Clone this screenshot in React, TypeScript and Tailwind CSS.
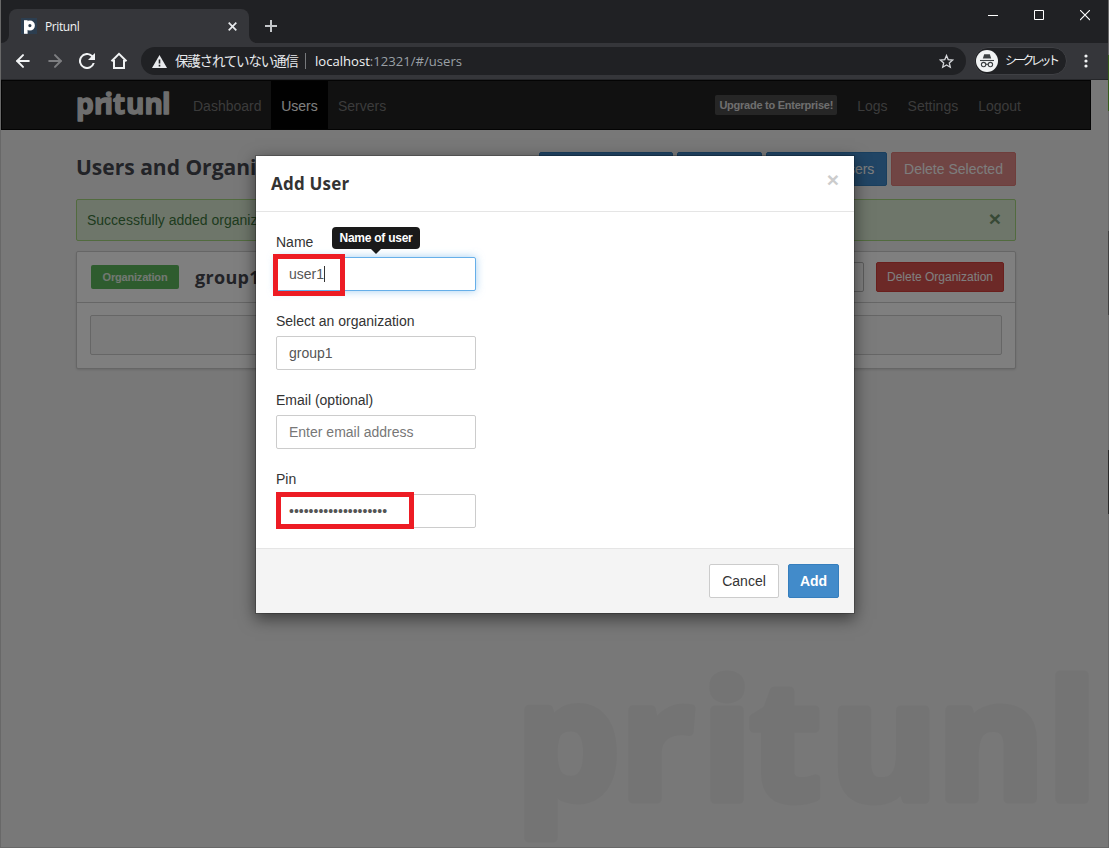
import React from "react";
import { ArrowLeft, ArrowRight } from "lucide-react";

const sans = "font-['Liberation_Sans',Arial,sans-serif]";
const ui = "font-['Open_Sans','Noto_Sans_CJK_JP',sans-serif]";
const heading = "font-['Open_Sans',sans-serif]";

function TitleBar() {
	return (
		<div className="flex h-[43px] bg-[#202124] pt-[9px] pl-[9px]">
			<div className="relative flex h-[34px] w-60 items-center rounded-t-lg bg-[#35363a] pl-3">
				<svg className="absolute bottom-0 -left-2" width="8" height="8">
					<path d="M8 0A8 8 0 0 1 0 8H8Z" fill="#35363a" />
				</svg>
				<svg className="absolute -right-2 bottom-0" width="8" height="8">
					<path d="M0 0A8 8 0 0 0 8 8H0Z" fill="#35363a" />
				</svg>
				<div className="flex h-4 w-4 items-center justify-center bg-[#2c3e50]">
					<svg width="16" height="16">
						<path d="M4.8 14V4" stroke="#fff" strokeWidth="3.6" strokeLinecap="square" />
						<circle cx="8.9" cy="7.6" r="3.3" fill="none" stroke="#fff" strokeWidth="3.4" />
					</svg>
				</div>
				<span className="mt-px ml-2 text-xs tracking-[-0.4px] text-[#f1f3f4]">Pritunl</span>
				<svg className="absolute top-[13px] left-[219px]" width="9" height="9">
					<path d="M0.7 0.7L8.3 8.3M8.3 0.7L0.7 8.3" stroke="#e8eaed" strokeWidth="1.7" />
				</svg>
			</div>
			<svg className="mt-[11px] ml-4" width="12" height="12">
				<path d="M6 0V12M0 6H12" stroke="#c4c7ca" strokeWidth="2" />
			</svg>
			<div className="ml-auto flex gap-[36px] pr-[19px]">
				<svg width="10" height="11">
					<path d="M0 6.5H10" stroke="#fff" />
				</svg>
				<svg width="10" height="11" className="mt-px">
					<path d="M0.5 0.5H9.5V9.5H0.5Z" fill="none" stroke="#fff" />
				</svg>
				<svg width="10" height="11" className="mt-px">
					<path d="M0 0L10 10M10 0L0 10" stroke="#fff" strokeWidth="1.1" />
				</svg>
			</div>
		</div>
	);
}

function Toolbar() {
	return (
		<div className="flex h-[37px] items-center border-b border-[#26272a] bg-[#35363a] pl-[13px]">
			<ArrowLeft className="h-5 w-5 text-[#f1f3f4]" strokeWidth={2.4} />
			<ArrowRight className="ml-3 h-5 w-5 text-[#7d7e81]" strokeWidth={2.4} />
			<svg className="ml-[14px]" width="16" height="16" viewBox="4 4 16 16">
				<path
					d="M17.65 6.35A8 8 0 1 0 19.73 14h-2.08A6 6 0 1 1 12 6c1.66 0 3.14.69 4.22 1.78L13 11h7V4z"
					fill="#f1f3f4"
				/>
			</svg>
			<svg className="ml-[15px]" width="18" height="18">
				<path d="M4 8V16H14V8M1.5 9.2L9 1.8L16.5 9.2" fill="none" stroke="#f1f3f4" strokeWidth="2" />
			</svg>
			<div className="ml-[13px] flex h-7 w-[825px] items-center rounded-full bg-[#202124] pl-[11px]">
				<svg width="15" height="13">
					<path d="M7.5 0L15 13H0Z" fill="#e8eaed" />
					<path d="M7.5 4.5V8.5M7.5 9.8V11.4" stroke="#202124" strokeWidth="1.6" />
				</svg>
				<span className="ml-[8px] w-[123px] text-[13.5px] tracking-[-1.2px] whitespace-nowrap text-[#e8eaed]">
					保護されていない通信
				</span>
				<span className="ml-[7px] h-4 w-px bg-[#77797c]" />
				<span className="mt-px ml-[9px] text-[13.1px] whitespace-nowrap text-[#f1f3f4]">
					localhost<span className="text-[#9aa0a6]">:12321/#/users</span>
				</span>
				<svg className="mr-[12px] ml-auto" width="15" height="15" viewBox="0 0 15 15">
					<path
						d="M7.5 1.5L9.2 5.6L13.7 6L10.3 8.9L11.3 13.2L7.5 10.9L3.7 13.2L4.7 8.9L1.3 6L5.8 5.6Z"
						fill="none"
						stroke="#d5d7da"
						strokeWidth="1.3"
					/>
				</svg>
			</div>
			<div className="ml-[8px] flex h-7 w-[93px] items-center rounded-full border border-[#3f4044] bg-[#202124] pl-px">
				<svg width="22" height="22">
					<circle cx="11" cy="11" r="11" fill="#f1f3f4" />
					<path d="M8.2 4.2H13.8L15.2 8.4H6.8Z" fill="#3c4043" />
					<path d="M4 10.5H18" stroke="#3c4043" strokeWidth="1.1" />
					<g fill="none" stroke="#3c4043" strokeWidth="1.1">
						<circle cx="7.6" cy="14.6" r="2.2" />
						<circle cx="14.4" cy="14.6" r="2.2" />
						<path d="M9.8 14.3H12.2" />
					</g>
				</svg>
				<span className="ml-[7px] text-xs tracking-[-3.4px] whitespace-nowrap text-[#f1f3f4]">シークレット</span>
			</div>
			<svg className="ml-[17px]" width="4" height="14" fill="#f1f3f4">
				<circle cx="2" cy="2" r="1.6" />
				<circle cx="2" cy="7" r="1.6" />
				<circle cx="2" cy="12" r="1.6" />
			</svg>
		</div>
	);
}

function Navbar() {
	return (
		<div className="ml-px flex h-[50px] w-[1090px] items-center border border-[#080808] bg-[#222] pl-[74px] text-[14px] text-[#777]">
			<svg className="mr-[25px] overflow-visible" width="92" height="32">
				<text
					x="0 18 28.5 37 50 68.5 86"
					y="25"
					className="font-['Open_Sans',sans-serif] text-[28px] font-bold"
					fill="#ddd"
					stroke="#ddd"
					strokeWidth="1.4"
					strokeLinejoin="round"
				>
					pritunl
				</text>
			</svg>
			<a className="w-[78px] pt-[2px]">Dashboard</a>
			<a className="flex h-full w-[57px] items-center justify-center bg-[#020202] pt-[2px] text-white">Users</a>
			<a className="ml-[10px] pt-[2px]">Servers</a>
			<a className="ml-auto flex h-5 w-[122px] items-center justify-center rounded-xs bg-[#4d4d4d] text-[11px] font-bold tracking-[-0.25px] whitespace-nowrap text-[#ddd]">
				Upgrade to Enterprise!
			</a>
			<a className="ml-[20px] pt-[2px]">Logs</a>
			<a className="ml-[20px] pt-[2px]">Settings</a>
			<a className="mr-[69px] ml-[20px] pt-[2px]">Logout</a>
		</div>
	);
}

const primaryButton = "h-[34px] rounded-xs border border-[#357ebd] bg-[#428bca] whitespace-nowrap";

function PageContent() {
	return (
		<div className="ml-[76px] w-[940px] pt-[22px]">
			<div className="flex h-[34px] items-center gap-1 text-[14px] text-white">
				<h2 className={`${heading} mr-auto pb-[3px] text-[21px] font-bold text-[#45474f]`}>
					Users and Organizations
				</h2>
				<button className={`${primaryButton} w-[134px]`}>Add Organization</button>
				<button className={`${primaryButton} w-[85px]`}>Add User</button>
				<button className={`${primaryButton} w-[121px]`}>Bulk Add Users</button>
				<button className="h-[34px] w-[125px] rounded-xs border border-[#de7c79] bg-[#e18a88] text-[#fafafa]">
					Delete Selected
				</button>
			</div>
			<div className="mt-[13px] flex h-[42px] items-center justify-between rounded-xs border border-[#a5d67e] bg-[#dcedd5] pr-[14px] pl-[10px] text-[14px] text-[#3c763d]">
				<span>Successfully added organization.</span>
				<span className="pb-[3px] text-[21px] leading-none font-bold text-[#71936c]">×</span>
			</div>
			<div className="mt-[10px] h-[118px] rounded-xs border border-[#ccc] bg-white shadow-sm">
				<div className="flex h-[51px] items-center border-b border-[#ccc] pr-[11px] pl-[14px]">
					<span className="flex h-6 w-[88px] items-center justify-center rounded-xs bg-[#5cb85c] text-[11px] font-bold tracking-[-0.2px] text-[#e5f0e5]">
						Organization
					</span>
					<h3 className={`${heading} ml-4 text-lg font-bold tracking-[0.3px] text-[#45474f]`}>group1</h3>
					<div className="mr-3 ml-auto h-[30px] w-[150px] rounded-xs border border-[#bbb]" />
					<button className="h-[30px] w-[128px] rounded-xs border border-[#d43f3a] bg-[#d9534f] text-xs whitespace-nowrap text-white">
						Delete Organization
					</button>
				</div>
				<div className="mt-3 ml-[13px] h-10 w-[912px] rounded-xs border border-[#ccc] bg-[#f7f7f7]" />
			</div>
		</div>
	);
}

function Watermark() {
	return (
		<svg className="absolute bottom-0 left-[520px] overflow-visible" width="587" height="190">
			<text
				x="-4 100 182 230 310 417 527"
				y="141"
				className="font-['Open_Sans',sans-serif] text-[164px] font-bold"
				fill="#e9e9e9"
				stroke="#e9e9e9"
				strokeWidth="9"
				strokeLinejoin="round"
			>
				pritunl
			</text>
		</svg>
	);
}

const input = "mt-[5px] flex h-[34px] w-[200px] items-center rounded-xs border bg-white px-3";

function AddUserModal() {
	return (
		<div className="absolute top-[155px] left-[255px] w-[600px] border border-black/20 bg-white bg-clip-padding text-[14px] leading-5 text-[#333] shadow-[0_5px_15px_rgba(0,0,0,0.5)]">
			<div className="flex h-14 items-center justify-between border-b border-[#e5e5e5] px-[15px]">
				<h4 className={`${heading} pt-px text-[17px] font-bold tracking-[0.2px]`}>Add User</h4>
				<span className="mb-2 text-[21px] leading-none font-bold text-[#ccc]">×</span>
			</div>
			<div className="flex flex-col gap-5 p-5">
				<div className="relative">
					<label className="block">Name</label>
					<div className={`${input} border-[#66afe9] text-[#555] shadow-[0_0_8px_rgba(102,175,233,0.6)]`}>
						user1
						<span className="h-4 w-px bg-[#333]" />
					</div>
					<div className="absolute -top-[5px] left-14 flex h-[22px] w-[88px] items-center justify-center rounded-[4px] bg-[#1a1a1a] text-xs font-bold tracking-[-0.25px] whitespace-nowrap text-white">
						Name of user
						<svg className="absolute top-[22px] left-[39px]" width="10" height="5">
							<path d="M0 0H10L5 5Z" fill="#1a1a1a" />
						</svg>
					</div>
					<div className="absolute top-[22px] -left-[3px] h-[42px] w-[72px] border-[5px] border-[#ed1c24]" />
				</div>
				<div>
					<label className="block">Select an organization</label>
					<div className={`${input} border-[#ccc] text-[#555]`}>group1</div>
				</div>
				<div>
					<label className="block">Email (optional)</label>
					<div className={`${input} border-[#ccc] text-[#777]`}>Enter email address</div>
				</div>
				<div className="relative">
					<label className="block">Pin</label>
					<div className={`${input} border-[#ccc] text-[#555]`}>••••••••••••••••••••</div>
					<div className="absolute top-[23px] left-0 h-[37px] w-[138px] border-[5px] border-[#ed1c24]" />
				</div>
			</div>
			<div className="flex h-[65px] items-center justify-end gap-[9px] border-t border-[#e5e5e5] bg-[#f4f4f4] pr-[15px]">
				<button className="h-[34px] w-[70px] rounded-xs border border-[#ccc] bg-white">Cancel</button>
				<button className="h-[34px] w-[51px] rounded-xs border border-[#357ebd] bg-[#428bca] font-bold text-white">
					Add
				</button>
			</div>
		</div>
	);
}

// window frame plus the bits of desktop showing along its right side
function WindowEdge() {
	return (
		<>
			<div className="absolute inset-0 border border-t-0 border-[#686868]" />
			<div className="absolute top-[55px] right-0 h-14 w-px bg-[#375c1a]" />
			<div className="absolute top-[231px] right-0 h-[84px] w-px bg-[#414141]" />
			<div className="absolute top-[450px] right-0 h-16 w-px bg-[#2a2a2a]" />
		</>
	);
}

export default function App() {
	return (
		<div className={`relative flex h-[848px] w-[1109px] flex-col overflow-hidden bg-[#202124] ${sans}`}>
			<div className={ui}>
				<TitleBar />
				<Toolbar />
			</div>
			<div className="relative flex-1 bg-[#f1f1f1]">
				<Watermark />
				<Navbar />
				<PageContent />
				<div className="absolute inset-0 bg-black/50" />
			</div>
			<WindowEdge />
			<AddUserModal />
		</div>
	);
}
